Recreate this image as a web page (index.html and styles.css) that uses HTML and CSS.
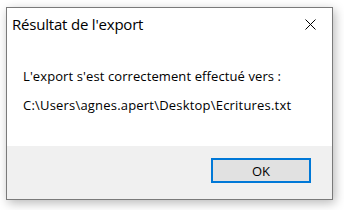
FILE: index.html
```html
<!DOCTYPE html>
<html lang="fr">
<head>
<meta charset="utf-8">
<link rel="stylesheet" href="styles.css">
</head>
<body>
<div class="window">
  <div class="titlebar">
    <span class="title">Résultat de l'export</span>
    <span class="close"><svg width="11" height="11" viewBox="0 0 11 11"><path d="M0.5 0.5 L10.5 10.5 M10.5 0.5 L0.5 10.5" stroke="#000" stroke-width="1" fill="none"/></svg></span>
  </div>
  <div class="content">
    <p class="msg">L'export s'est correctement effectué vers :</p>
    <p class="msg path">C:\Users\agnes.apert\Desktop\Ecritures.txt</p>
  </div>
  <div class="footer">
    <button class="ok">OK</button>
  </div>
</div>
</body>
</html>
```
FILE: styles.css
```css
html, body {
  margin: 0;
  padding: 0;
  background: #ffffff;
}
body {
  width: 344px;
  height: 210px;
  overflow: hidden;
}
.window {
  margin: 7px 0 0 6px;
  width: 325px;
  height: 191px;
  border: 1px solid #7a7a7a;
  background: #ffffff;
  box-shadow: 2px 3px 10px rgba(0,0,0,0.28);
  display: flex;
  flex-direction: column;
  font-family: "Open Sans", "Noto Sans", sans-serif;
}
.titlebar {
  height: 32px;
  display: flex;
  align-items: center;
  justify-content: space-between;
  padding: 0 16px 0 5px;
}
.title {
  font-size: 15px;
  color: #000;
  letter-spacing: -0.2px;
}
.close {
  display: flex;
}
.content {
  flex: 1;
  padding: 28px 0 0 16px;
}
.msg {
  margin: 0 0 13px 0;
  font-size: 13px;
  line-height: 16px;
  letter-spacing: 0.1px;
  color: #000;
}
.path {
  letter-spacing: 0.2px;
}
.footer {
  height: 53px;
  background: #f0f0f0;
  display: flex;
  justify-content: flex-end;
  align-items: flex-start;
  padding: 12px 21px 0 0;
  box-sizing: border-box;
}
.ok {
  width: 100px;
  height: 25px;
  border: 2px solid #0078d7;
  background: #e1e1e1;
  font-family: "Open Sans", "Noto Sans", sans-serif;
  font-size: 13px;
  color: #000;
  padding: 0;
}
```
